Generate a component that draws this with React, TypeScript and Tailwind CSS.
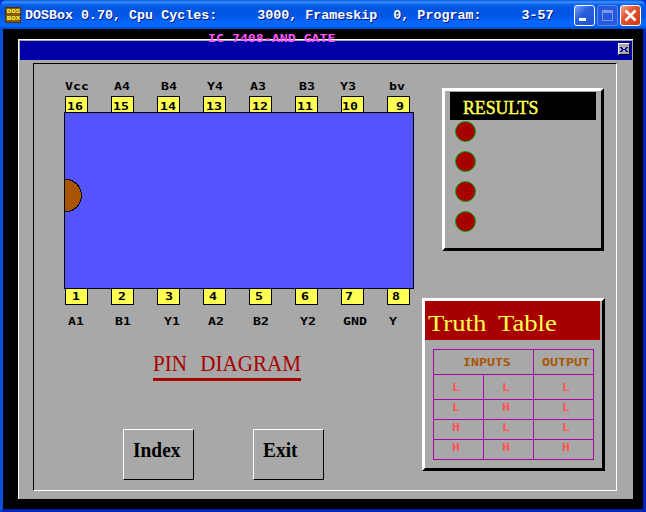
import React from "react";

type Pin = { name: string; nameX: string; num: string; numX: string };

const topPins: Pin[] = [
  { name: "Vcc", nameX: "pl-0", num: "16", numX: "pl-[1px]" },
  { name: "A4", nameX: "pl-[3px]", num: "15", numX: "pl-[1px]" },
  { name: "B4", nameX: "pl-[4px]", num: "14", numX: "pl-[2px]" },
  { name: "Y4", nameX: "pl-[4px]", num: "13", numX: "pl-[2px]" },
  { name: "A3", nameX: "pl-[1px]", num: "12", numX: "pl-[2px]" },
  { name: "B3", nameX: "pl-[4px]", num: "11", numX: "pl-[1px]" },
  { name: "Y3", nameX: "-ml-[1px] mr-[1px]", num: "10", numX: "pl-0" },
  { name: "bv", nameX: "pl-[2px]", num: "9", numX: "pl-[8px]" },
];

const bottomPins: Pin[] = [
  { name: "A1", nameX: "pl-[3px]", num: "1", numX: "pl-[6px]" },
  { name: "B1", nameX: "pl-[4px]", num: "2", numX: "pl-[6px]" },
  { name: "Y1", nameX: "pl-[7px]", num: "3", numX: "pl-[7px]" },
  { name: "A2", nameX: "pl-[5px]", num: "4", numX: "pl-[5px]" },
  { name: "B2", nameX: "pl-[4px]", num: "5", numX: "pl-[5px]" },
  { name: "Y2", nameX: "pl-[5px]", num: "6", numX: "pl-[5px]" },
  { name: "GND", nameX: "pl-[2px]", num: "7", numX: "pl-[3px]" },
  { name: "Y", nameX: "pl-[2px]", num: "8", numX: "pl-[4px]" },
];

const rows = ["LLL", "LHL", "HLL", "HHH"];

function Mono({ children }: { children: string }) {
  return (
    <span className="block h-[9px] w-max origin-left scale-x-[1.38] whitespace-pre font-['DejaVu_Sans_Mono',monospace] text-[9.6px] leading-[9px] font-bold">
      {children}
    </span>
  );
}

function Names({ pins }: { pins: Pin[] }) {
  return (
    <div className="ml-[31px] flex h-[9px]">
      {pins.map((p) => (
        <div key={p.num} className={`w-[46px] shrink-0 ${p.nameX}`}>
          <Mono>{p.name}</Mono>
        </div>
      ))}
    </div>
  );
}

function Pads({ pins, top }: { pins: Pin[]; top?: boolean }) {
  return (
    <div className="ml-[31px] flex h-4 gap-[23px]">
      {pins.map((p) => (
        <div
          key={p.num}
          className={`h-4 w-[23px] shrink-0 border-x border-black bg-[#ffff54] ${p.numX} ${top ? "border-t pt-[5px]" : "border-b pt-[3px]"}`}
        >
          <Mono>{p.num}</Mono>
        </div>
      ))}
    </div>
  );
}

function TitleBar() {
  return (
    <header className="flex h-[29px] shrink-0 items-start rounded-t-[7px] bg-[linear-gradient(180deg,#0a50d8_0%,#3a92ff_7%,#0862ee_16%,#0055e0_30%,#0057e6_55%,#0466ff_75%,#0466ff_88%,#0048c8_100%)] pl-[5px]">
      <div className="mt-[7px] flex h-4 w-4 flex-col items-center justify-center border border-[#4a3000] bg-[#8a5a00] font-['Liberation_Mono',monospace] text-[6px] leading-[7px] font-bold text-[#ffff54]">
        <span className="block scale-x-125">DOS</span>
        <span className="block scale-x-125">BOX</span>
      </div>
      <h1 className="mt-[7px] ml-1 w-[549px] font-['Liberation_Mono',monospace] text-[13.35px] leading-[18px] font-bold whitespace-pre text-white [text-shadow:1px_1px_0_#0a1883]">
        DOSBox 0.70, Cpu Cycles:     3000, Frameskip  0, Program:     3-57
      </h1>
      <div className="mt-[5px] flex gap-[2px]">
        <div className="h-[21px] w-[21px] rounded-[3px] border border-white bg-[linear-gradient(135deg,#7ea2f4,#2a60e0_40%,#1e50d0)]">
          <div className="mt-[12px] ml-1 h-[3px] w-[7px] bg-white" />
        </div>
        <div className="h-[21px] w-[21px] rounded-[3px] border border-[#5f86ea] bg-[#2659de] p-[4px]">
          <div className="h-[11px] w-[11px] border border-t-[3px] border-[#7b98ea]" />
        </div>
        <div className="h-[21px] w-[21px] rounded-[3px] border border-white bg-[linear-gradient(135deg,#f0a58c,#e35430_40%,#cc3c14)]">
          <svg viewBox="0 0 19 19" className="h-[19px] w-[19px]">
            <path d="M4.5 4.5l10 10M14.5 4.5l-10 10" stroke="white" strokeWidth="2.6" />
          </svg>
        </div>
      </div>
    </header>
  );
}

function Chip() {
  return (
    <div className="ml-[30px] h-[177px] w-[350px] border border-black bg-[#5454ff] pt-[66px]">
      <svg viewBox="0 0 17 33" className="h-[33px] w-[17px]" shapeRendering="crispEdges">
        <path d="M0 .5h1a15.5 16 0 0 1 0 32h-1" fill="#a85400" stroke="black" />
      </svg>
    </div>
  );
}

function Results() {
  return (
    <section className="ml-[19px] h-[163px] w-[162px] border-3 border-t-white border-r-black border-b-black border-l-white pt-px">
      <h2 className="ml-[5px] h-7 w-[146px] bg-black pt-[6px] pl-[13px] text-[#ffff54]">
        <span className="block w-max origin-left scale-x-[0.91] font-['Liberation_Serif',serif] text-[19.5px] leading-5 [-webkit-text-stroke:0.5px]">
          RESULTS
        </span>
      </h2>
      <div className="mt-px ml-[10px] flex flex-col gap-[9px]">
        {rows.map((r) => (
          <i key={r} className="h-[21px] w-[21px] rounded-full border border-[#00a800] bg-[#a80000]" />
        ))}
      </div>
    </section>
  );
}

function TruthTable() {
  return (
    <section className="mt-[47px] -ml-px h-[173px] w-[183px] border-3 border-t-white border-r-black border-b-black border-l-white">
      <h2 className="h-[39px] w-[175px] bg-[#a80000] pt-[10px] pl-[3px] text-[#ffff54]">
        <span className="block w-max origin-left scale-x-[1.11] font-['Liberation_Serif',serif] text-[24px] leading-6 [word-spacing:5px]">
          Truth Table
        </span>
      </h2>
      <div className="mt-[9px] ml-2 w-[161px] border-t border-l border-[#a800a8] text-[#ff5454]">
        <div className="flex h-[25px] text-[#a85400]">
          <div className="w-[100px] border-r border-b border-[#a800a8] pt-[8px] pl-[29px]">
            <Mono>INPUTS</Mono>
          </div>
          <div className="w-[60px] border-r border-b border-[#a800a8] pt-[8px] pl-[8px]">
            <Mono>OUTPUT</Mono>
          </div>
        </div>
        {rows.map((r, i) => (
          <div key={r} className={`flex ${i === 0 ? "h-[25px]" : "h-5"}`}>
            {r.split("").map((c, j) => (
              <div
                key={j}
                className={`border-r border-b border-[#a800a8] ${j === 2 ? "w-[60px] pl-[28px]" : "w-[50px] pl-[18px]"} ${i === 0 ? "pt-[8px]" : "pt-[3px]"}`}
              >
                <Mono>{c}</Mono>
              </div>
            ))}
          </div>
        ))}
      </div>
    </section>
  );
}

function DosButton({ label }: { label: string }) {
  return (
    <button className="flex h-[51px] w-[71px] items-start border border-t-white border-r-black border-b-black border-l-white pt-[10px] pl-[9px] text-left">
      <span className="block w-max origin-left scale-x-[0.97] font-['Liberation_Serif',serif] text-[20px] leading-5 font-bold">
        {label}
      </span>
    </button>
  );
}

export default function App() {
  return (
    <div className="flex h-[512px] w-[646px] flex-col overflow-hidden bg-[#0831d9]">
      <TitleBar />
      <main className="relative h-[483px] border-3 border-t-0 border-r-[#0024b8] border-b-[#0024b8] border-l-[#0c50e0] bg-black pt-[10px] pl-[15px]">
        <div className="flex h-[460px] w-[615px] flex-col border-t border-l border-white bg-[#a8a8a8] text-black">
          <div className="mt-px ml-px flex h-[19px] w-[612px] shrink-0 justify-end bg-[#0000a8] pt-[2px] pr-[2px]">
            <div className="flex h-[12px] w-[12px] items-center justify-center border border-t-white border-r-black border-b-black border-l-white bg-[#a8a8a8]">
              <svg viewBox="0 0 8 5" className="h-[5px] w-[8px]" shapeRendering="crispEdges">
                <path
                  d="M0 0h2v1h1v1h2V1h1V0h2v1H7v1H6v1h1v1h1v1H6V4H5V3H3v1H2v1H0V4h1V3h1V2H1V1H0z"
                  fill="#0000a8"
                />
              </svg>
            </div>
          </div>
          <div className="mt-[3px] ml-[14px] flex h-[428px] w-[584px] border border-t-black border-r-white border-b-white border-l-black">
            <div className="w-[389px] shrink-0 pt-[18px]">
              <Names pins={topPins} />
              <div className="h-[5px]" />
              <Pads pins={topPins} top />
              <Chip />
              <Pads pins={bottomPins} />
              <div className="h-[12px]" />
              <Names pins={bottomPins} />
              <h2 className="mt-[25px] ml-[119px] h-[30px] w-[148px] border-b-3 border-[#a80000] text-[#a80000]">
                <span className="block w-max origin-left scale-x-[0.88] font-['Liberation_Serif',serif] text-[24px] leading-6 [word-spacing:9px]">
                  PIN DIAGRAM
                </span>
              </h2>
              <div className="mt-12 ml-[89px] flex gap-[59px]">
                <DosButton label="Index" />
                <DosButton label="Exit" />
              </div>
            </div>
            <div className="pt-6">
              <Results />
              <TruthTable />
            </div>
          </div>
        </div>
        <div className="absolute top-[5px] left-[205px] text-[#ff54ff]">
          <Mono>IC 7408-AND GATE</Mono>
        </div>
      </main>
    </div>
  );
}
